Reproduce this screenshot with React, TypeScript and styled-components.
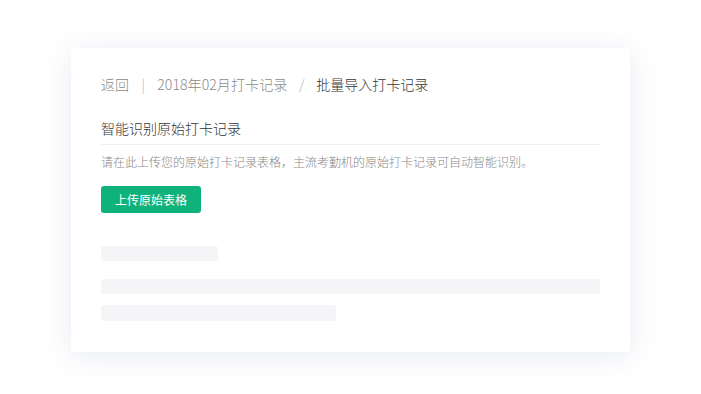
import React from "react";
import styled, { createGlobalStyle } from "styled-components";

const Global = createGlobalStyle`
  html, body { margin: 0; padding: 0; background: #ffffff; }
  body { font-family: "Helvetica Neue", "Noto Sans CJK SC", "Noto Sans", sans-serif; font-weight: 300; }
`;

const Page = styled.div`
  display: flex;
  justify-content: center;
  padding: 48px 0 42px;
`;

const Card = styled.div`
  width: 559px;
  box-sizing: border-box;
  padding: 26px 30px 31px;
  background: #fff;
  box-shadow: 0 4px 28px rgba(40, 60, 140, 0.1);
  display: flex;
  flex-direction: column;
`;

const Crumbs = styled.div`
  display: flex;
  align-items: center;
  font-size: 14px;
  line-height: 20px;
  color: #8a8a8a;
`;

const Crumb = styled.span<{ $current?: boolean }>`
  color: ${(p) => (p.$current ? "#333" : "#8a8a8a")};
  letter-spacing: ${(p) => (p.$current ? "0" : "0.1px")};
`;

const Sep = styled.span<{ $w: number }>`
  color: #b4b4b4;
  width: ${(p) => p.$w}px;
  text-align: center;
`;

const Title = styled.div`
  margin-top: 24px;
  font-size: 14px;
  line-height: 20px;
  color: #333;
  padding-bottom: 6px;
  border-bottom: 1px solid #eeeeee;
`;

const Desc = styled.div`
  margin-top: 8px;
  font-size: 12px;
  line-height: 18px;
  color: #888;
`;

const Button = styled.button`
  margin-top: 15px;
  align-self: flex-start;
  height: 27px;
  width: 100px;
  border: none;
  border-radius: 3px;
  background: #0fb27a;
  color: #fff;
  font-family: inherit;
  font-weight: 400;
  font-size: 12px;
  padding: 0;
  cursor: pointer;
`;

const Bar = styled.div<{ $w: string; $top: number; $h?: number }>`
  margin-top: ${(p) => p.$top}px;
  width: ${(p) => p.$w};
  height: ${(p) => p.$h ?? 15}px;
  border-radius: 3px;
  background: #f5f5f7;
`;

export default function App() {
  return (
    <>
      <Global />
      <Page>
        <Card>
          <Crumbs>
            <Crumb>返回</Crumb>
            <Sep $w={28}>|</Sep>
            <Crumb>2018年02月打卡记录</Crumb>
            <Sep $w={29}>/</Sep>
            <Crumb $current>批量导入打卡记录</Crumb>
          </Crumbs>
          <Title>智能识别原始打卡记录</Title>
          <Desc>请在此上传您的原始打卡记录表格，主流考勤机的原始打卡记录可自动智能识别。</Desc>
          <Button>上传原始表格</Button>
          <Bar $w="117px" $top={33} />
          <Bar $w="100%" $top={18} />
          <Bar $w="235px" $top={11} $h={16} />
        </Card>
      </Page>
    </>
  );
}
